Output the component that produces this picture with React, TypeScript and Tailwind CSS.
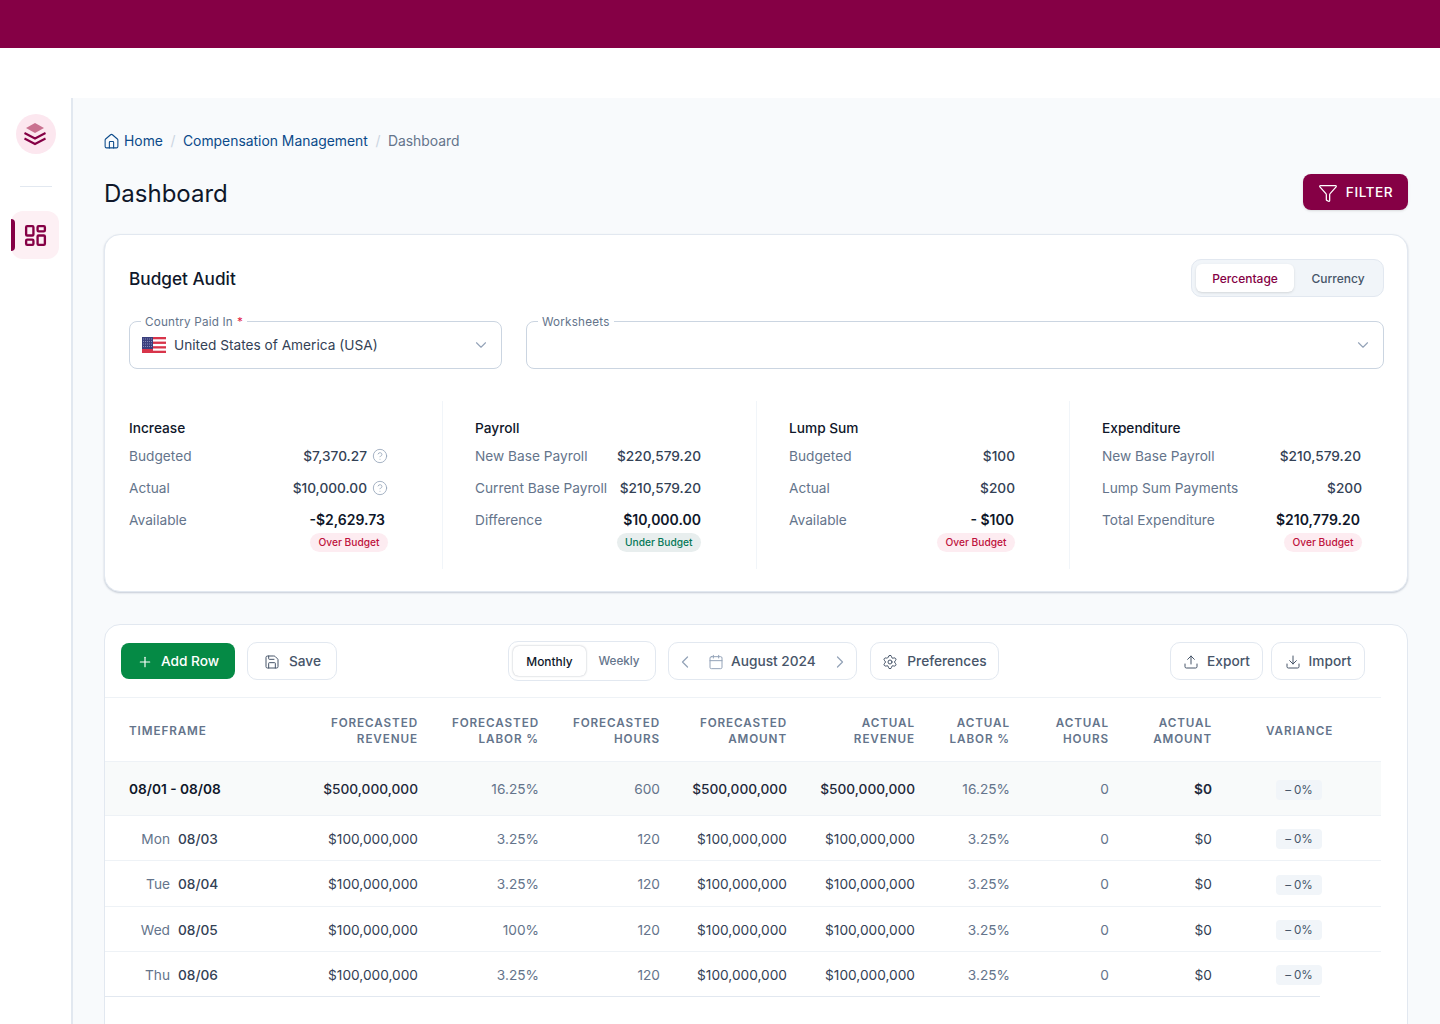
import { ChevronDown, ChevronLeft, ChevronRight, Calendar, CircleHelp, Download, Filter, House, LayoutDashboard, Plus, Save, Settings, Upload } from "lucide-react";
import type { ReactNode } from "react";

const summary = [
  {
    title: "Increase",
    className: "pr-[54px]",
    rows: [
      { label: "Budgeted", value: "$7,370.27", help: true },
      { label: "Actual", value: "$10,000.00", help: true },
      { label: "Available", value: "-$2,629.73", bold: true, offset: "mr-[3px]" },
    ],
    badge: "Over Budget",
  },
  {
    title: "Payroll",
    className: "border-l border-[#f1f5f9] pl-8 pr-[55px]",
    rows: [
      { label: "New Base Payroll", value: "$220,579.20" },
      { label: "Current Base Payroll", value: "$210,579.20" },
      { label: "Difference", value: "$10,000.00", bold: true },
    ],
    badge: "Under Budget",
  },
  {
    title: "Lump Sum",
    className: "border-l border-[#f1f5f9] pl-8 pr-[54px]",
    rows: [
      { label: "Budgeted", value: "$100" },
      { label: "Actual", value: "$200" },
      { label: "Available", value: "- $100", bold: true, offset: "mr-px" },
    ],
    badge: "Over Budget",
  },
  {
    title: "Expenditure",
    className: "border-l border-[#f1f5f9] pl-8 pr-[22px]",
    rows: [
      { label: "New Base Payroll", value: "$210,579.20", offset: "mr-px" },
      { label: "Lump Sum Payments", value: "$200" },
      { label: "Total Expenditure", value: "$210,779.20", bold: true, offset: "mr-[2px]" },
    ],
    badge: "Over Budget",
  },
];

const gridCols = "grid grid-cols-[193px_120px_121px_121px_127px_128px_95px_99px_103px_169px] items-center pt-[2px]";

const headers = [
  ["FORECASTED", "REVENUE"],
  ["FORECASTED", "LABOR %"],
  ["FORECASTED", "HOURS"],
  ["FORECASTED", "AMOUNT"],
  ["ACTUAL", "REVENUE"],
  ["ACTUAL", "LABOR %"],
  ["ACTUAL", "HOURS"],
  ["ACTUAL", "AMOUNT"],
];

const days = [
  { day: "Mon", date: "08/03", labor: "3.25%", height: "h-[45px]" },
  { day: "Tue", date: "08/04", labor: "3.25%", height: "h-[46px]" },
  { day: "Wed", date: "08/05", labor: "100%", height: "h-[45px]" },
  { day: "Thu", date: "08/06", labor: "3.25%", height: "h-[44px]" },
];

function OutlineButton({ children, className }: { children: ReactNode; className: string }) {
  return (
    <button className={`flex h-[38px] items-center rounded-[10px] border border-[#e2e8f0] bg-white text-[13.7px] font-medium text-[#475569] ${className}`}>
      {children}
    </button>
  );
}

function Field({ label, required, className, children }: { label: string; required?: boolean; className: string; children?: ReactNode }) {
  return (
    <div className={`relative flex h-12 items-center rounded-lg border border-[#cbd5e1] bg-white ${className}`}>
      <span className="absolute -top-[7px] left-[11px] bg-white px-1 text-[11.7px] leading-[14px] tracking-[0.2px] text-[#64748b]">
        {label}
        {required && <span className="ml-1 text-[#e11d48]">*</span>}
      </span>
      {children}
      <ChevronDown className="absolute right-[11px] top-[14px] h-[18px] w-[18px] text-[#94a3b8]" strokeWidth={1.5} />
    </div>
  );
}

function UsFlag() {
  return (
    <svg width="24" height="16" viewBox="0 0 24 16" className="mr-2">
      <rect width="24" height="16" rx="1" fill="#fff" />
      <rect y="0" width="24" height="2.3" fill="#d8344a" />
      <rect y="4.6" width="24" height="2.3" fill="#d8344a" />
      <rect y="9.2" width="24" height="2.3" fill="#d8344a" />
      <rect y="13.7" width="24" height="2.3" fill="#d8344a" />
      <rect width="11" height="16" fill="#d8344a" />
      <rect width="11" height="12" fill="#3b3f7d" />
      <path d="M1 2h9M1 4.500h9M1 7h9M1 9.500h9" stroke="#9aa0c8" strokeWidth="0.8" strokeDasharray="1 1" />
    </svg>
  );
}

function VarianceBadge() {
  return (
    <span className="ml-[64px] flex h-5 w-[46px] items-center justify-center rounded bg-[#f1f5f9] pt-[2px] text-[11.7px] text-[#475569]">
      <span className="mr-[3px]">–</span>0%
    </span>
  );
}

export default function App() {
  return (
    <div className="h-[1024px] overflow-hidden bg-white font-['Inter',sans-serif] text-[#0f172a]">
      <div className="h-12 bg-[#850045]" />
      <div className="h-[50px] bg-white" />
      <div className="flex">
        <aside className="flex h-[926px] w-[73px] shrink-0 flex-col items-center border-r-2 border-[#e2e8f0] bg-white pt-4">
          <div className="flex h-10 w-10 items-center justify-center rounded-full bg-[#fce7ef]">
            <svg width="24" height="24" viewBox="0 0 24 24" fill="none" className="-translate-x-px">
              <path d="M12 1 21 6l-9 5-9-5z" fill="#c9718f" />
              <path d="M1.500 11 12 16.500 22.500 11M1.500 16.500 12 22 22.500 16.500" stroke="#850045" strokeWidth="2" />
            </svg>
          </div>
          <div className="mt-8 h-px w-8 bg-[#e2e8f0]" />
          <div className="relative mt-6 mr-px flex h-12 w-12 items-center justify-center rounded-xl bg-[#fdf0f4]">
            <span className="absolute left-0 top-2 h-8 w-1 rounded-r bg-[#850045]" />
            <LayoutDashboard className="h-[25px] w-[25px] text-[#850045]" strokeWidth={2.25} />
          </div>
        </aside>

        <main className="min-w-0 flex-1 bg-[#f8fafc] pl-[31px] pr-8 pt-[33px]">
          <nav className="flex h-5 items-center text-[13.9px] text-[#0b4a8a]">
            <House className="mr-[3px] h-[17px] w-[17px] -translate-x-px" strokeWidth={1.5} />
            <span>Home</span>
            <span className="mx-[7.5px] text-[#cbd5e1]">/</span>
            <span>Compensation Management</span>
            <span className="mx-[7.5px] text-[#cbd5e1]">/</span>
            <span className="text-[#64748b]">Dashboard</span>
          </nav>

          <div className="mt-[23px] flex h-9 items-center justify-between">
            <h1 className="pt-[3px] text-2xl font-normal text-[#0f172a]">Dashboard</h1>
            <button className="flex h-9 w-[105px] items-center justify-center gap-2 rounded-lg bg-[#850045] pt-px text-[13.7px] font-medium tracking-[0.5px] text-white shadow-sm">
              <Filter className="h-5 w-5" strokeWidth={1.5} />
              FILTER
            </button>
          </div>

          <section className="mt-6 h-[358px] rounded-2xl border border-[#e2e8f0] bg-white pl-6 pr-[23px] pt-6 shadow-[0_1px_2px_rgba(100,116,139,0.35)]">
            <div className="flex h-[38px] items-center justify-between">
              <h2 className="pt-[2px] text-[17.2px] font-medium text-[#0f172a]">Budget Audit</h2>
              <div className="flex h-[38px] w-[193px] items-center rounded-[10px] border border-[#e2e8f0] bg-[#f1f5f9] pl-1">
                <span className="flex h-7 w-[98px] items-center justify-center rounded-md bg-white pt-px text-xs font-medium text-[#850045] shadow-sm">Percentage</span>
                <span className="flex h-7 flex-1 items-center justify-center pr-px pt-px text-xs font-medium text-[#475569]">Currency</span>
              </div>
            </div>

            <div className="mt-6 flex gap-6">
              <Field label="Country Paid In" required className="w-[373px] pl-3">
                <UsFlag />
                <span className="pt-px text-[13.7px] text-[#334155]">United States of America (USA)</span>
              </Field>
              <Field label="Worksheets" className="flex-1" />
            </div>

            <div className="mt-8 grid h-[168px] grid-cols-[313px_314px_313px_315px]">
              {summary.map((col) => (
                <div key={col.title} className={`pt-[17px] ${col.className}`}>
                  <div className="text-[13.7px] font-medium leading-5 text-[#0f172a]">{col.title}</div>
                  <div className="mt-[8px] flex flex-col gap-3">
                    {col.rows.map((row) => (
                      <div key={row.label} className="flex h-5 items-center justify-between text-[13.7px]">
                        <span className="text-[#64748b]">{row.label}</span>
                        <span className={`flex items-center ${row.bold ? "text-sm font-semibold text-[#0f172a]" : "font-medium text-[#334155]"} ${row.offset ?? ""}`}>
                          {row.value}
                          {row.help && <CircleHelp className="ml-[5px] h-4 w-4 text-[#94a3b8]" strokeWidth={1.25} />}
                        </span>
                      </div>
                    ))}
                  </div>
                  <div className="mt-[3px] flex justify-end">
                    <span className={`rounded-full px-[8.5px] py-[2px] text-[10.2px] font-medium leading-[15px] ${col.badge === "Over Budget" ? "bg-[#fdecf1] text-[#be123c]" : "bg-[#e8eeee] text-[#047857]"}`}>
                      {col.badge}
                    </span>
                  </div>
                </div>
              ))}
            </div>
          </section>

          <section className="mt-8 h-[500px] rounded-2xl border border-[#e2e8f0] bg-white pl-0 pt-4">
            <div className="mx-4 flex h-10 w-[1244px] items-center">
              <button className="flex h-9 w-[114px] items-center justify-center gap-2 rounded-lg bg-[#058a45] pt-px text-[13.7px] font-medium text-white">
                <Plus className="h-4 w-4" strokeWidth={1.75} />
                Add Row
              </button>
              <OutlineButton className="ml-3 w-[90px] justify-center gap-[9px] pl-px pt-px">
                <Save className="h-4 w-4" strokeWidth={1.5} />
                Save
              </OutlineButton>
              <div className="ml-[171px] flex h-10 w-[148px] items-center rounded-[10px] border border-[#e2e8f0] bg-white pl-1">
                <span className="flex h-[30px] w-[73px] items-center justify-center rounded-md bg-white pt-px text-[11.9px] font-medium text-[#0f172a] shadow-[0_0_2px_rgba(71,85,105,0.45)]">Monthly</span>
                <span className="flex flex-1 items-center justify-center pr-[3px] pt-px text-[11.7px] font-medium text-[#64748b]">Weekly</span>
              </div>
              <OutlineButton className="ml-3 w-[189px] px-[6px] pt-px">
                <ChevronLeft className="h-5 w-5 text-[#94a3b8]" strokeWidth={1.5} />
                <Calendar className="ml-[13px] h-4 w-4 text-[#94a3b8]" strokeWidth={1.5} />
                <span className="ml-[7px]">August 2024</span>
                <ChevronRight className="ml-auto h-5 w-5 text-[#94a3b8]" strokeWidth={1.5} />
              </OutlineButton>
              <OutlineButton className="ml-[13px] w-[129px] justify-center gap-[9px] pt-px">
                <Settings className="h-4 w-4" strokeWidth={1.5} />
                Preferences
              </OutlineButton>
              <OutlineButton className="ml-auto w-[93px] justify-center gap-2 pt-px">
                <Upload className="h-4 w-4" strokeWidth={1.5} />
                Export
              </OutlineButton>
              <OutlineButton className="ml-2 w-[94px] justify-center gap-2 pt-px">
                <Download className="h-4 w-4" strokeWidth={1.5} />
                Import
              </OutlineButton>
            </div>

            <div className="mt-4 w-[1276px]">
              <div className={`${gridCols} h-[65px] border-y border-[#eef2f6] text-[11.7px] font-semibold leading-4 tracking-[0.9px] text-[#64748b]`}>
                <div className="pl-6">TIMEFRAME</div>
                {headers.map(([top, bottom], i) => (
                  <div key={i} className="text-right">
                    {top}
                    <br />
                    {bottom}
                  </div>
                ))}
                <div className="pl-[54px]">VARIANCE</div>
              </div>

              <div className={`${gridCols} h-[54px] border-b border-[#eef2f6] bg-[#f8fafa] text-[13.7px]`}>
                <div className="pl-6 font-semibold text-[#0f172a]">08/01 - 08/08</div>
                <div className="text-right font-medium text-[#1e293b]">$500,000,000</div>
                <div className="text-right text-[#64748b]">16.25%</div>
                <div className="text-right text-[#64748b]">600</div>
                <div className="text-right font-medium text-[#1e293b]">$500,000,000</div>
                <div className="text-right font-medium text-[#1e293b]">$500,000,000</div>
                <div className="text-right text-[#64748b]">16.25%</div>
                <div className="text-right text-[#64748b]">0</div>
                <div className="text-right font-semibold text-[#1e293b]">$0</div>
                <VarianceBadge />
              </div>

              {days.map((row, i) => (
                <div key={row.day} className={`${gridCols} ${row.height} text-[13.7px] ${i < 3 ? "border-b border-[#eef2f6]" : ""}`}>
                  <div className="flex pl-6">
                    <span className="w-[41px] text-right text-[#64748b]">{row.day}</span>
                    <span className="ml-2 font-medium text-[#334155]">{row.date}</span>
                  </div>
                  <div className="text-right text-[#334155]">$100,000,000</div>
                  <div className="text-right text-[#64748b]">{row.labor}</div>
                  <div className="text-right text-[#64748b]">120</div>
                  <div className="text-right text-[#334155]">$100,000,000</div>
                  <div className="text-right text-[#334155]">$100,000,000</div>
                  <div className="text-right text-[#64748b]">3.25%</div>
                  <div className="text-right text-[#64748b]">0</div>
                  <div className="text-right text-[#334155]">$0</div>
                  <VarianceBadge />
                </div>
              ))}
              <div className="h-px w-[1215px] bg-[#e2e8f0]" />
            </div>
          </section>
        </main>
      </div>
    </div>
  );
}
